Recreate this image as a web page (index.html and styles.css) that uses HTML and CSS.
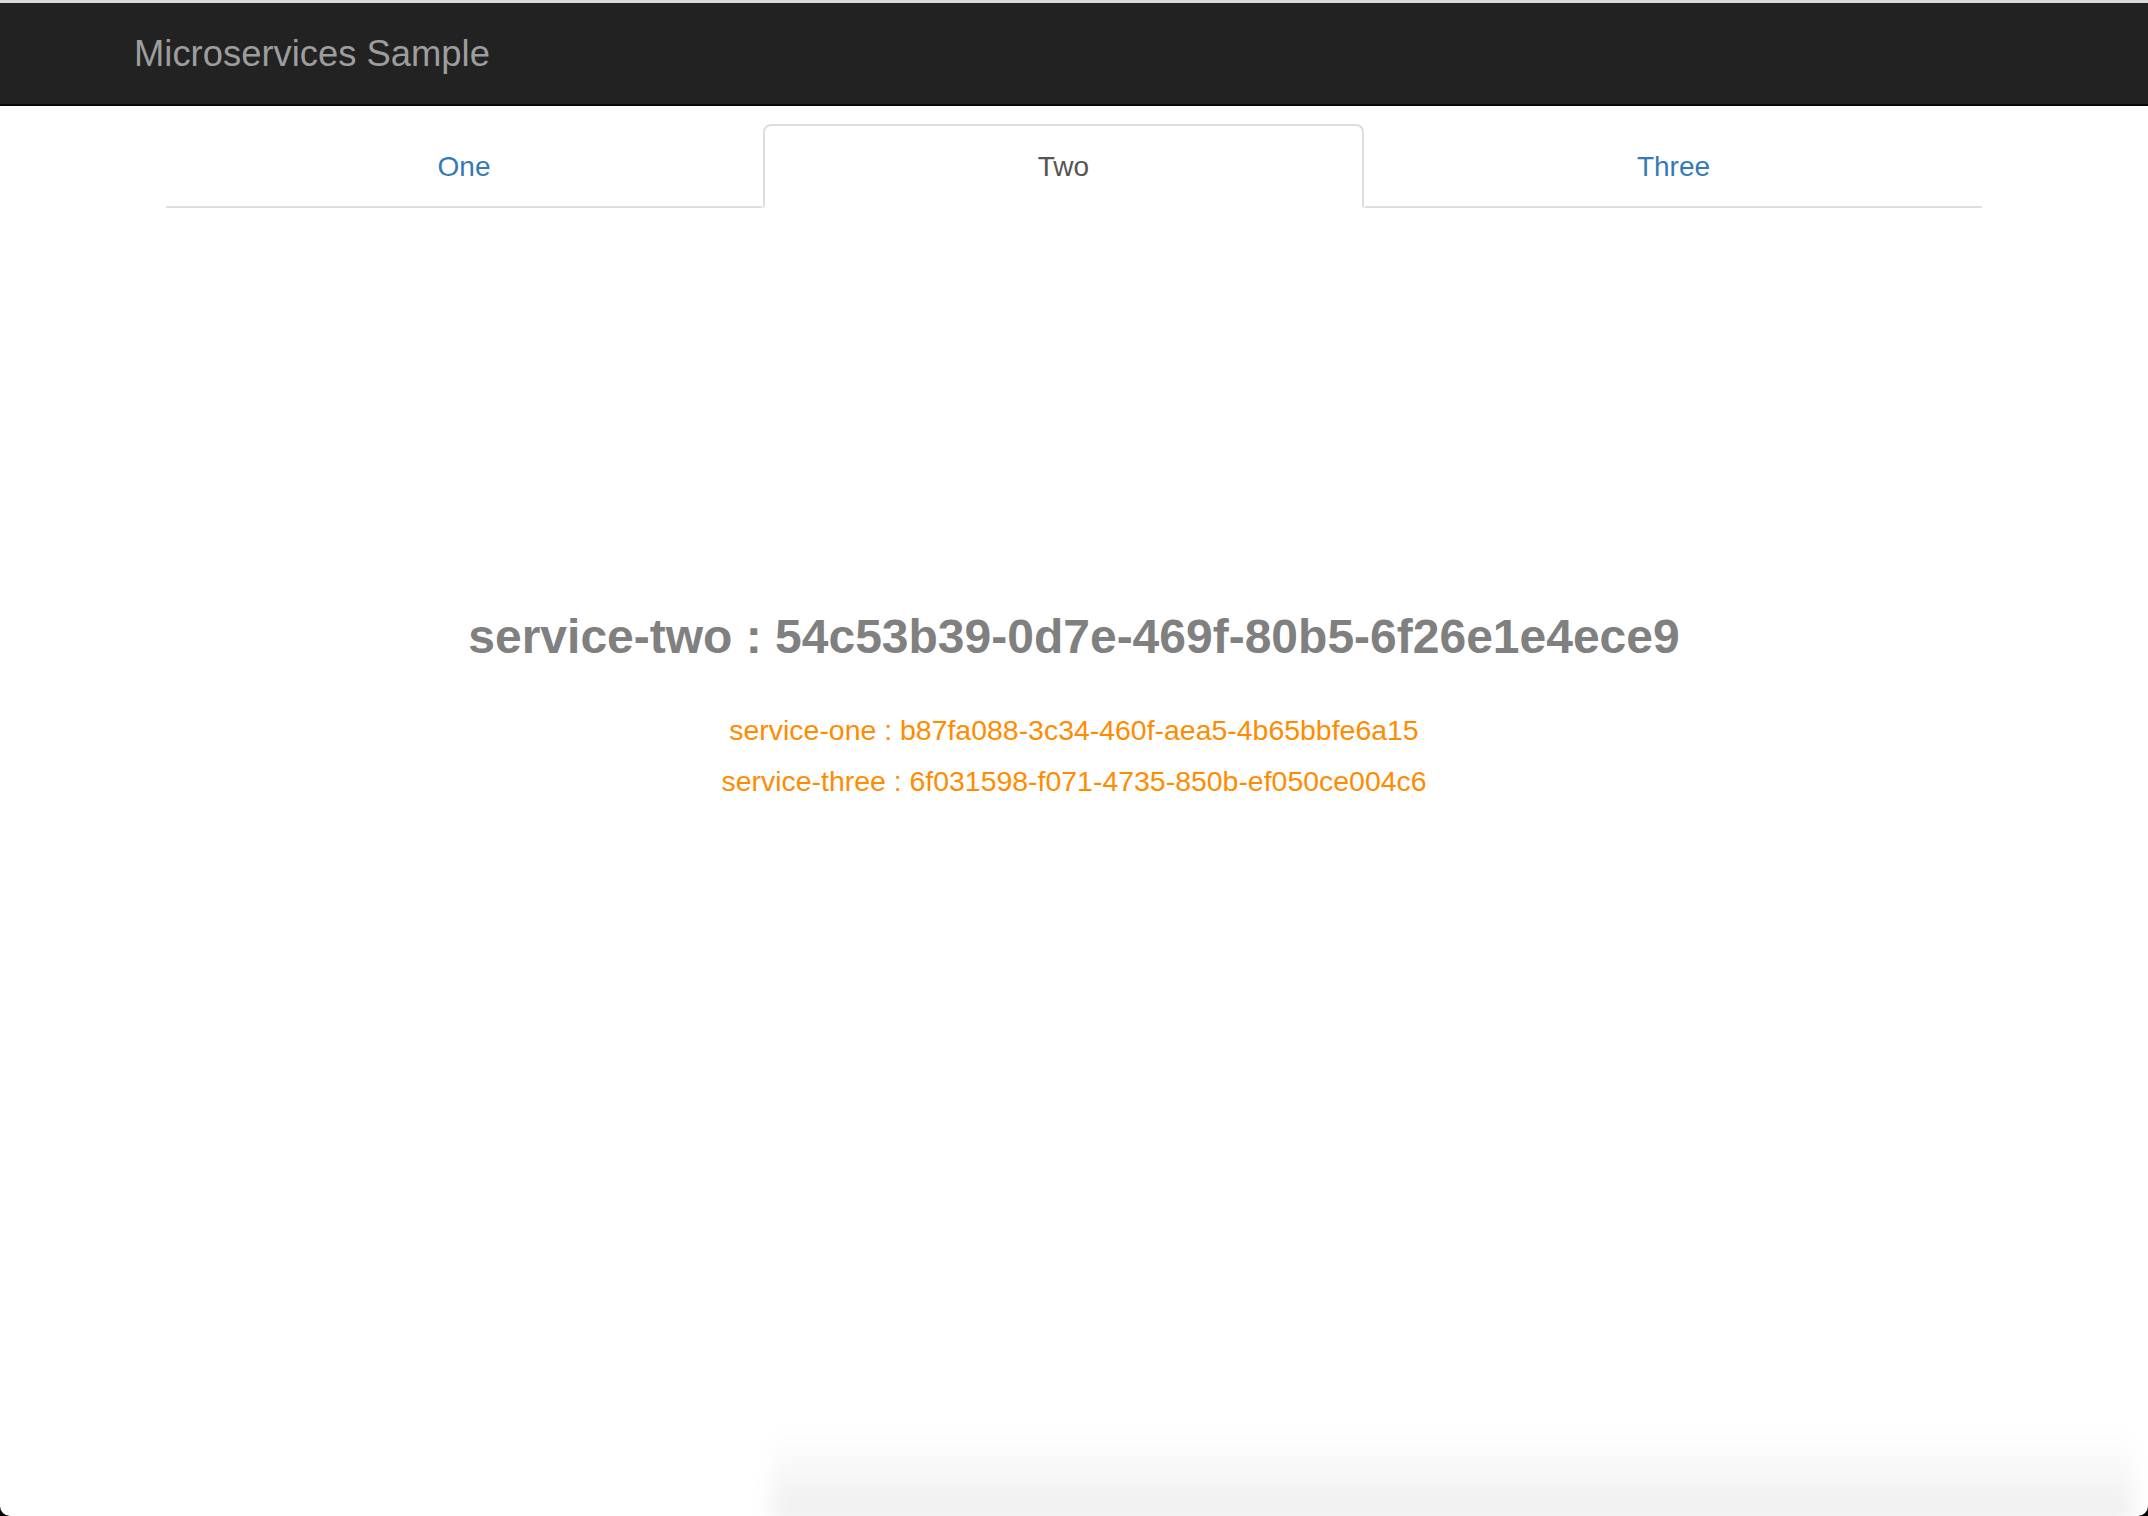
FILE: index.html
```html
<!DOCTYPE html>
<html lang="en">
<head>
<meta charset="utf-8">
<title>Microservices Sample</title>
<link rel="stylesheet" href="styles.css">
</head>
<body>
<div class="window">
  <div class="chrome-edge"></div>
  <nav class="navbar">
    <span class="brand">Microservices Sample</span>
  </nav>
  <ul class="tabs">
    <li class="tab tab-one"><a href="#">One</a></li>
    <li class="tab tab-two active"><a href="#">Two</a></li>
    <li class="tab tab-three"><a href="#">Three</a></li>
  </ul>
  <main class="content">
    <h3 class="service-main">service-two : 54c53b39-0d7e-469f-80b5-6f26e1e4ece9</h3>
    <div class="service-other">service-one : b87fa088-3c34-460f-aea5-4b65bbfe6a15</div>
    <div class="service-other">service-three : 6f031598-f071-4735-850b-ef050ce004c6</div>
  </main>
  <div class="dock-shadow"></div>
</div>
</body>
</html>
```

FILE: styles.css
```css
html {
  background: #000;
}
body {
  margin: 0;
  font-family: "Liberation Sans", Arial, Helvetica, sans-serif;
  background: #000;
}
.window {
  position: relative;
  min-height: 1516px;
  background: #fff;
  border-radius: 0 0 10px 10px;
  overflow: hidden;
}
.chrome-edge {
  height: 3px;
  background: #d9d9d9;
}
.navbar {
  height: 101px;
  background: #222;
  border-bottom: 2px solid #080808;
  display: flex;
  align-items: center;
  padding-left: 134px;
}
.brand {
  font-size: 36.4px;
  line-height: 40px;
  color: #9d9d9d;
}
.tabs {
  list-style: none;
  margin: 18px auto 0;
  padding: 0;
  width: 1818px;
  display: grid;
  grid-template-columns: 598px 601px 619px;
}
.tab a {
  display: block;
  text-align: center;
  font-size: 28px;
  line-height: 40px;
  padding: 21px 0 19px;
  color: #337ab7;
  text-decoration: none;
  border: 2px solid transparent;
  border-bottom-color: #ddd;
  border-radius: 8px 8px 0 0;
}
.tab.active a {
  color: #555;
  border-color: #ddd;
  border-bottom-color: #fff;
}
.content {
  padding-top: 402px;
  text-align: center;
}
.service-main {
  margin: 0;
  font-size: 48px;
  line-height: 53px;
  font-weight: bold;
  color: #808080;
}
.service-other {
  font-size: 28.45px;
  line-height: 51px;
  color: #ff8c00;
}
.service-main + .service-other {
  margin-top: 42px;
}
.dock-shadow {
  position: absolute;
  left: 772px;
  right: 14px;
  bottom: -6px;
  height: 96px;
  border-radius: 24px 24px 0 0;
  background: linear-gradient(to bottom, rgba(0,0,0,0) 0%, rgba(0,0,0,0.015) 30%, rgba(0,0,0,0.07) 100%);
  filter: blur(10px);
}
```
